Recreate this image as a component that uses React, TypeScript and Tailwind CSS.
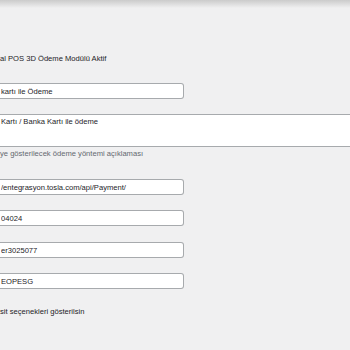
export default function App() {
  const inputCls =
    "h-[16px] w-[184px] rounded-r-[3px] border border-l-0 border-[#a7aaad] bg-white pl-[1px] text-[7.6px] text-[#1d2327] outline-none";

  return (
    <main className="h-[350px] w-[350px] overflow-hidden bg-[#f0f0f1] font-['Liberation_Sans',Arial,sans-serif] text-[7.6px] leading-[10px] text-[#1d2327]">
      <div className="h-[8px] bg-gradient-to-b from-[#cbcbcb] to-[#f0f0f1]" />
      <div className="flex flex-col items-start">
        <label className="mt-[46px]">al POS 3D Ödeme Modülü Aktif</label>

        <input readOnly defaultValue="kartı ile Ödeme" className={`mt-[19px] ${inputCls}`} />

        <textarea
          readOnly
          defaultValue="Kartı / Banka Kartı ile ödeme"
          className="mt-[15px] h-[33px] w-[360px] resize-none border-y border-[#a7aaad] bg-white pl-[1px] pt-[2px] text-[7.6px] leading-[10px] text-[#1d2327] outline-none"
        />
        <p className="mt-[2px] text-[#646970]">ye gösterilecek ödeme yöntemi açıklaması</p>

        <input readOnly defaultValue="/entegrasyon.tosla.com/api/Payment/" className={`mt-[20px] ${inputCls}`} />
        <input readOnly defaultValue="04024" className={`mt-[15px] ${inputCls}`} />
        <input readOnly defaultValue="er3025077" className={`mt-[16px] ${inputCls}`} />
        <input readOnly defaultValue="EOPESG" className={`mt-[15px] ${inputCls}`} />

        <label className="mt-[18px]">sit seçenekleri gösterilsin</label>
      </div>
    </main>
  );
}
